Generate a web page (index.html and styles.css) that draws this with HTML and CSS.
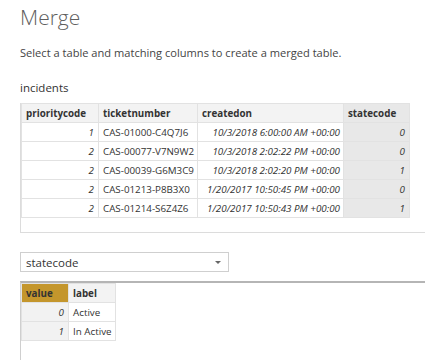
FILE: index.html
```html
<!DOCTYPE html>
<html lang="en">
<head>
    <meta charset="UTF-8">
    <title>Merge</title>
    <link rel="stylesheet" href="styles.css">
</head>
<body>

<div class="dialog">
    <h1 class="title">Merge</h1>
    <p class="intro">Select a table and matching columns to create a merged table.</p>

    <div class="table-name">incidents</div>

    <!-- Vista previa de la primera tabla -->
    <div class="preview">
        <table class="grid main">
            <colgroup>
                <col class="c-priority">
                <col class="c-ticket">
                <col class="c-created">
                <col class="c-state">
            </colgroup>
            <thead>
                <tr>
                    <th>prioritycode</th>
                    <th>ticketnumber</th>
                    <th>createdon</th>
                    <th class="picked">statecode</th>
                </tr>
            </thead>
            <tbody>
                <tr><td class="num">1</td><td>CAS-01000-C4Q7J6</td><td class="date">10/3/2018 6:00:00 AM +00:00</td><td class="num picked">0</td></tr>
                <tr><td class="num">2</td><td>CAS-00077-V7N9W2</td><td class="date">10/3/2018 2:02:22 PM +00:00</td><td class="num picked">0</td></tr>
                <tr><td class="num">2</td><td>CAS-00039-G6M3C9</td><td class="date">10/3/2018 2:02:20 PM +00:00</td><td class="num picked">1</td></tr>
                <tr><td class="num">2</td><td>CAS-01213-P8B3X0</td><td class="date">1/20/2017 10:50:45 PM +00:00</td><td class="num picked">0</td></tr>
                <tr><td class="num">2</td><td>CAS-01214-S6Z4Z6</td><td class="date">1/20/2017 10:50:43 PM +00:00</td><td class="num picked">1</td></tr>
            </tbody>
        </table>
    </div>

    <!-- Selector de la segunda tabla -->
    <div class="select">
        <span>statecode</span>
        <span class="caret"></span>
    </div>

    <div class="preview-2">
        <table class="grid small">
            <colgroup>
                <col class="c-value">
                <col class="c-label">
            </colgroup>
            <thead>
                <tr>
                    <th class="gold">value</th>
                    <th>label</th>
                </tr>
            </thead>
            <tbody>
                <tr><td class="num shade">0</td><td>Active</td></tr>
                <tr><td class="num shade">1</td><td>In Active</td></tr>
            </tbody>
        </table>
    </div>
</div>

</body>
</html>
```

FILE: styles.css
```css
/* Estilo global */
body {
    margin: 0;
    padding: 0;
    background-color: #ffffff;
    color: #333;
    font-family: 'Open Sans', 'Noto Sans', sans-serif;
    overflow: hidden;
}

.dialog {
    padding-left: 20px;
}

/* Título */
.title {
    font-size: 21px;
    font-weight: 300;
    color: #5f5f5f;
    margin: 0;
    padding-top: 1px;
    line-height: 32px;
}

.intro {
    font-size: 11.1px;
    color: #444;
    margin: 12px 0 0 0;
    line-height: 16px;
}

.table-name {
    font-size: 11.5px;
    color: #333;
    margin-top: 19px;
    line-height: 16px;
}

/* Vista previa */
.preview {
    margin-top: 7px;
    height: 130px;
    border-left: 1px solid #dcdcdc;
    border-bottom: 1px solid #dcdcdc;
    box-sizing: border-box;
}

.grid {
    border-collapse: collapse;
    table-layout: fixed;
    font-size: 9.8px;
    color: #333;
}

.grid.main {
    width: 388px;
}

.c-priority { width: 77px; }
.c-ticket { width: 99px; }
.c-created { width: 146px; }
.c-state { width: 66px; }

.grid th,
.grid td {
    height: 19px;
    padding: 0 3px 0 4px;
    border: 1px solid #e2e2e2;
    white-space: nowrap;
    overflow: hidden;
    box-sizing: border-box;
}

.grid th {
    background-color: #f3f3f3;
    text-align: left;
    font-weight: bold;
    color: #333;
}

.grid .num {
    text-align: right;
    font-style: italic;
    padding-right: 4px;
}

.grid .date {
    font-style: italic;
    text-align: right;
    padding-right: 3px;
}

.grid .picked {
    background-color: #e8e8e8;
}

/* Selector */
.select {
    margin-top: 19px;
    width: 209px;
    height: 20px;
    border: 1px solid #cfcfcf;
    box-sizing: border-box;
    display: flex;
    align-items: center;
    justify-content: space-between;
    padding: 0 7px 0 5px;
    font-size: 11.5px;
    color: #333;
}

.caret {
    width: 0;
    height: 0;
    border-left: 3px solid transparent;
    border-right: 3px solid transparent;
    border-top: 3px solid #666;
}

/* Segunda tabla */
.preview-2 {
    margin-top: 9px;
    height: 90px;
    border-top: 2px solid #b5b5b5;
    border-left: 1px solid #cfcfcf;
}

.grid.small {
    width: 94px;
}

.c-value { width: 47px; }
.c-label { width: 47px; }

.grid.small th.gold {
    background-color: #c4962c;
}

.grid.small .shade {
    background-color: #f2f2f2;
}
```
